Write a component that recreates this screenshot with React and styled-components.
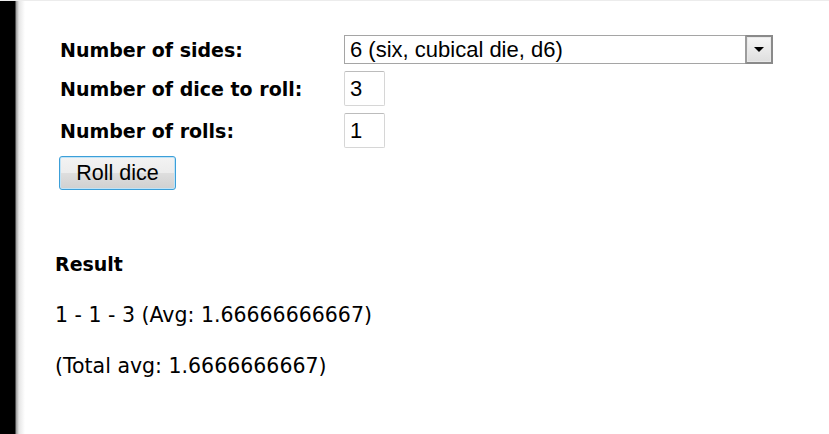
import React from 'react';
import styled, { createGlobalStyle } from 'styled-components';

const GlobalStyle = createGlobalStyle`
  html, body {
    margin: 0;
    padding: 0;
    background: #fff;
  }
  body {
    font-family: Verdana, "DejaVu Sans", sans-serif;
    color: #000;
  }
`;

const Page = styled.div`
  display: flex;
  width: 829px;
  height: 434px;
  overflow: hidden;
  border-top: 1px solid #ececec;
  box-sizing: border-box;
`;

const Edge = styled.div`
  width: 25px;
  flex: none;
  background: linear-gradient(to right, #000 0, #000 15px, #9a9a9a 16px, #e6e6e6 19px, #fff 25px);
`;

const Content = styled.div`
  flex: 1;
  padding: 34px 0 0 30px;
`;

const Form = styled.form`
  display: grid;
  grid-template-columns: 284px auto;
  row-gap: 7px;
  align-items: center;
  padding-left: 5px;
`;

const Label = styled.label`
  font-weight: bold;
  font-size: 19px;
  line-height: 24px;
`;

const Select = styled.div`
  display: flex;
  width: 429px;
  height: 29px;
  box-sizing: border-box;
  border: 1px solid #a5a5a5;
  font-family: "Liberation Sans", Arial, sans-serif;
  font-size: 22px;
  align-items: center;
`;

const SelectText = styled.span`
  flex: 1;
  padding-left: 5px;
`;

const SelectButton = styled.span`
  width: 28px;
  height: 29px;
  margin-right: -1px;
  box-sizing: border-box;
  border: 2px solid #8a8a8a;
  border-left-color: #9c9c9c;
  box-shadow: inset 0 0 0 1px #e8e8e8;
  background: linear-gradient(#f6f6f6, #dedede);
  display: flex;
  align-items: center;
  justify-content: center;
`;

const NumberBox = styled.div`
  width: 41px;
  height: 35px;
  box-sizing: border-box;
  border: 1px solid #d6d6d6;
  border-top-color: #bcbcbc;
  border-radius: 2px;
  font-family: "Liberation Sans", Arial, sans-serif;
  font-size: 22px;
  line-height: 33px;
  padding-left: 5px;
`;

const Button = styled.button`
  grid-column: 1 / 2;
  justify-self: start;
  width: 117px;
  height: 34px;
  margin-top: 1px;
  margin-left: -1px;
  border: 1px solid #3c9fd8;
  border-radius: 3px;
  box-shadow: inset 0 0 0 1px #bfe3f7;
  background: linear-gradient(#f3f3f3 0%, #ececec 50%, #dedede 51%, #d0d0d0 100%);
  font-family: "Liberation Sans", Arial, sans-serif;
  font-size: 21.5px;
  color: #000;
  padding: 0;
`;

const ResultTitle = styled.h3`
  margin: 62px 0 0;
  font-size: 19px;
  line-height: 24px;
  font-weight: bold;
`;

const ResultLine = styled.p`
  margin: 27px 0 0;
  font-size: 20.5px;
  line-height: 24px;
`;

export default function App() {
  return (
    <>
      <GlobalStyle />
      <Page>
        <Edge />
        <Content>
          <Form>
            <Label>Number of sides:</Label>
            <Select>
              <SelectText>6 (six, cubical die, d6)</SelectText>
              <SelectButton>
                <svg width="10" height="5" viewBox="0 0 10 5">
                  <path d="M0 0h10L5 5z" fill="#000" />
                </svg>
              </SelectButton>
            </Select>
            <Label>Number of dice to roll:</Label>
            <NumberBox>3</NumberBox>
            <Label>Number of rolls:</Label>
            <NumberBox>1</NumberBox>
            <Button type="button">Roll dice</Button>
          </Form>
          <ResultTitle>Result</ResultTitle>
          <ResultLine>1 - 1 - 3 (Avg: 1.66666666667)</ResultLine>
          <ResultLine>(Total avg: 1.6666666667)</ResultLine>
        </Content>
      </Page>
    </>
  );
}
